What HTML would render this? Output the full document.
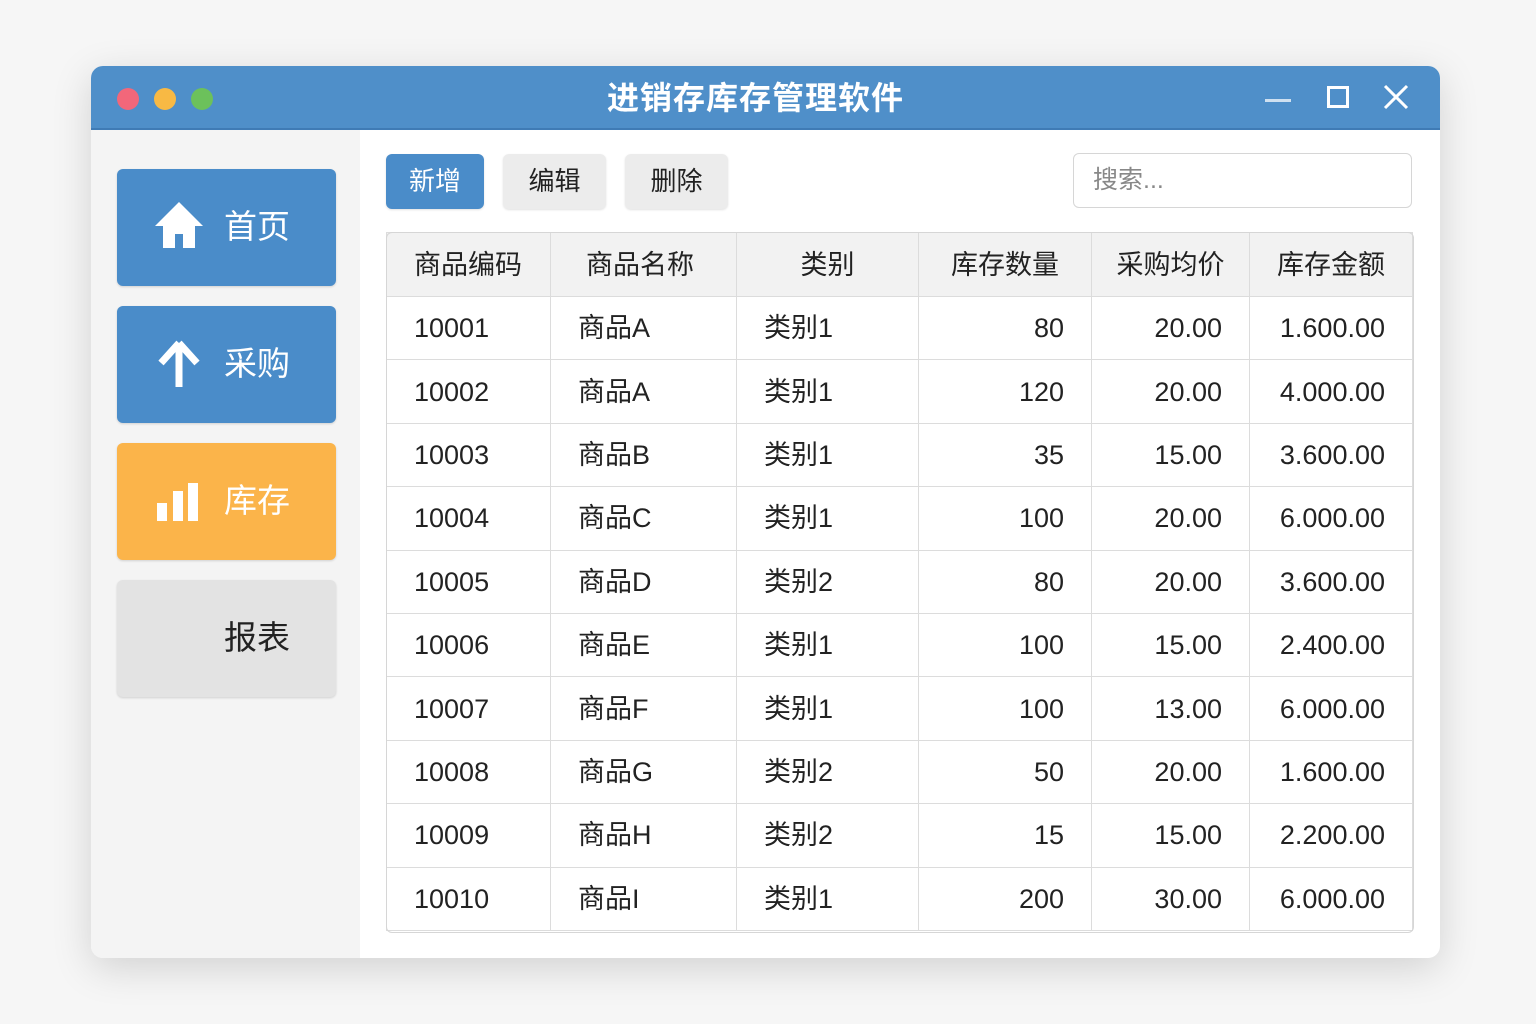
<!DOCTYPE html>
<html><head><meta charset="utf-8"><style>
*{box-sizing:border-box;margin:0;padding:0}
body{width:1536px;height:1024px;background:#f6f6f6;font-family:"Liberation Sans","Noto Sans CJK SC",sans-serif;position:relative;overflow:hidden}
.win{position:absolute;left:91px;top:66px;width:1349px;height:892px;border-radius:12px;background:#fff;box-shadow:0 10px 40px rgba(0,0,0,.15);overflow:hidden}
.tb{position:absolute;left:0;top:0;width:100%;height:64px;background:#4f8fc9;border-bottom:2px solid #3f7bb5}
.dot{position:absolute;top:22px;width:22px;height:22px;border-radius:50%}
.title{position:absolute;left:0;right:0;top:12px;text-align:center;color:#fff;font-size:32px;font-weight:bold;line-height:40px;letter-spacing:1px;padding-right:20px}
.side{position:absolute;left:0;top:64px;width:269px;bottom:0;background:#f4f4f4}
.nb{position:absolute;left:26px;width:219px;height:117px;border-radius:6px;color:#fff;font-size:33px;box-shadow:0 1px 2px rgba(0,0,0,.15)}
.nb span{position:absolute;left:107px;top:38px;line-height:40px}
.btn{position:absolute;top:88px;height:55px;border-radius:6px;font-size:26px;text-align:center;line-height:55px;background:#ececec;color:#222;box-shadow:0 1px 2px rgba(0,0,0,.12)}
table{position:absolute;left:295px;top:166px;width:1027px;border-collapse:collapse;table-layout:fixed;font-size:27px;color:#222}
.tw{position:absolute;left:295px;top:166px;width:1028px;height:701px;border:1px solid #d6d6d6;border-radius:6px;pointer-events:none}
td,th{border:1px solid #dcdcdc;height:63.4px;font-weight:normal;padding:0 27px;white-space:nowrap;line-height:30px;overflow:hidden}
th{background:#f2f2f2;height:64px;padding:0 10px}
td.r{text-align:right}
</style></head><body>
<div class="win">
<div class="tb">
<div class="dot" style="left:26px;background:#f2677a"></div>
<div class="dot" style="left:63px;background:#f8b944"></div>
<div class="dot" style="left:100px;background:#6cc15b"></div>
<div class="title">进销存库存管理软件</div>
<div style="position:absolute;left:1174px;top:33px;width:26px;height:3px;background:#cfe0f0"></div>
<div style="position:absolute;left:1236px;top:20px;width:22px;height:22px;border:3px solid #fff"></div>
<svg style="position:absolute;left:1292px;top:18px" width="26" height="26"><path d="M2 2L24 24M24 2L2 24" stroke="#fff" stroke-width="3"/></svg>
</div>
<div class="side">
<div class="nb" style="top:39px;background:#4a8cc9"><svg style="position:absolute;left:36px;top:31px" width="52" height="50"><path d="M26 2L2 26h8v22h12V34h8v14h12V26h8z" fill="#fff"/></svg><span>首页</span></div>
<div class="nb" style="top:176px;background:#4a8cc9"><svg style="position:absolute;left:40px;top:33px" width="44" height="50"><path d="M22 4L4 24M22 4L40 24M22 4V48" stroke="#fff" stroke-width="7" fill="none"/></svg><span>采购</span></div>
<div class="nb" style="top:313px;background:#fbb44a"><svg style="position:absolute;left:40px;top:40px" width="44" height="40"><rect x="0" y="20" width="10" height="18" fill="#fff"/><rect x="16" y="8" width="10" height="30" fill="#fff"/><rect x="31" y="0" width="10" height="38" fill="#fff"/></svg><span>库存</span></div>
<div class="nb" style="top:450px;background:#e3e3e3;color:#222"><span>报表</span></div>
</div>
<div class="btn" style="left:295px;width:98px;background:#4a8cc9;color:#fff">新增</div>
<div class="btn" style="left:412px;width:103px">编辑</div>
<div class="btn" style="left:534px;width:103px">删除</div>
<div style="position:absolute;left:982px;top:87px;width:339px;height:55px;border:1px solid #d6d6d6;border-radius:6px;font-size:25px;color:#888;line-height:53px;padding-left:19px">搜索...</div>
<table>
<tr><th style="width:164px;padding-left:27px;text-align:left">商品编码</th><th style="width:186px;text-align:left;padding-left:35px">商品名称</th><th style="width:182px">类别</th><th style="width:173px">库存数量</th><th style="width:158px">采购均价</th><th>库存金额</th></tr>
<tr><td>10001</td><td>商品A</td><td>类别1</td><td class="r">80</td><td class="r">20.00</td><td class="r">1.600.00</td></tr>
<tr><td>10002</td><td>商品A</td><td>类别1</td><td class="r">120</td><td class="r">20.00</td><td class="r">4.000.00</td></tr>
<tr><td>10003</td><td>商品B</td><td>类别1</td><td class="r">35</td><td class="r">15.00</td><td class="r">3.600.00</td></tr>
<tr><td>10004</td><td>商品C</td><td>类别1</td><td class="r">100</td><td class="r">20.00</td><td class="r">6.000.00</td></tr>
<tr><td>10005</td><td>商品D</td><td>类别2</td><td class="r">80</td><td class="r">20.00</td><td class="r">3.600.00</td></tr>
<tr><td>10006</td><td>商品E</td><td>类别1</td><td class="r">100</td><td class="r">15.00</td><td class="r">2.400.00</td></tr>
<tr><td>10007</td><td>商品F</td><td>类别1</td><td class="r">100</td><td class="r">13.00</td><td class="r">6.000.00</td></tr>
<tr><td>10008</td><td>商品G</td><td>类别2</td><td class="r">50</td><td class="r">20.00</td><td class="r">1.600.00</td></tr>
<tr><td>10009</td><td>商品H</td><td>类别2</td><td class="r">15</td><td class="r">15.00</td><td class="r">2.200.00</td></tr>
<tr><td>10010</td><td>商品I</td><td>类别1</td><td class="r">200</td><td class="r">30.00</td><td class="r">6.000.00</td></tr>
</table>
<div class="tw"></div>
</div>
</body></html>
